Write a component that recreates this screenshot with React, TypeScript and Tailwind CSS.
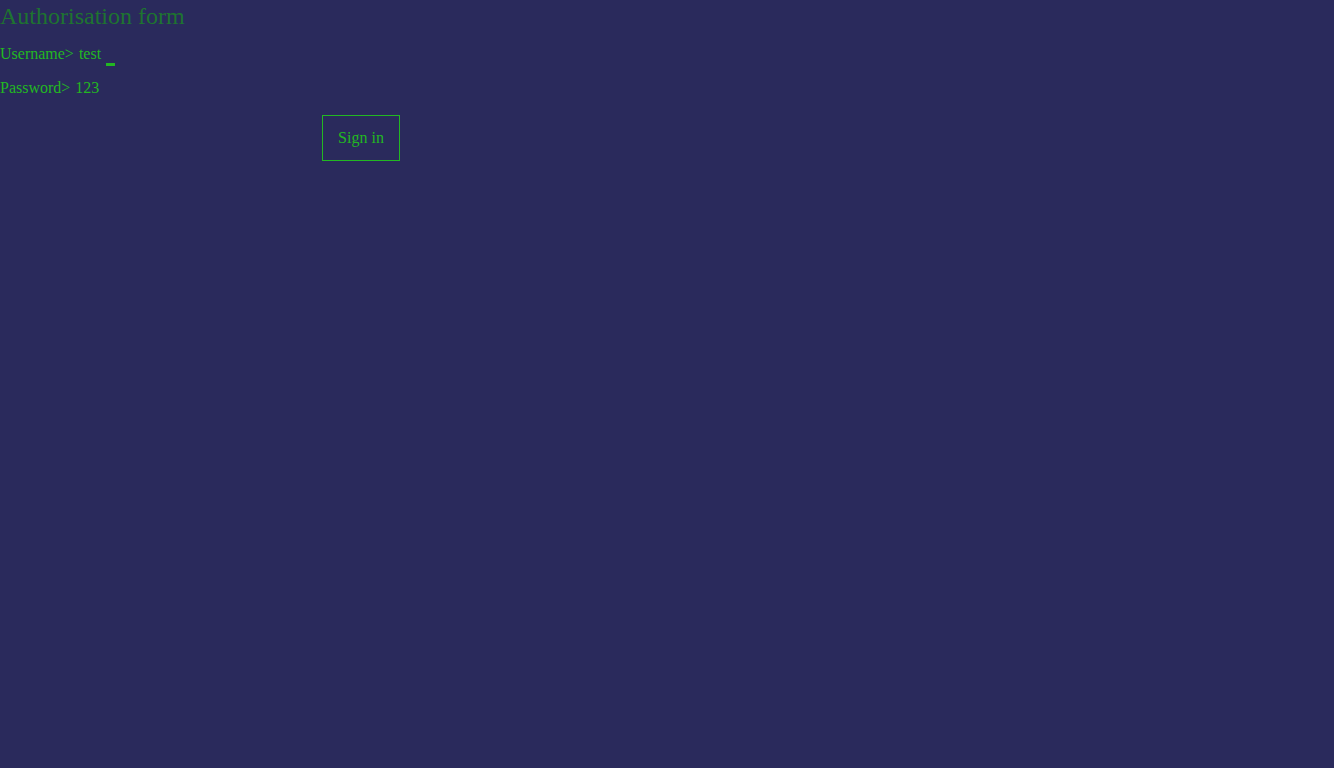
export default function App() {
  return (
    <div className="min-h-screen w-full bg-[#2a2a5c] font-['Liberation_Serif',serif] text-[#22b822]">
      <h1 className="text-[24px] leading-[32px] text-[#1e7430]">Authorisation form</h1>
      <div className="mt-[5px] flex h-[34px] items-center text-[16px]">
        <span>Username&gt;</span>
        <span className="ml-[5px]">test</span>
        <span className="ml-[5px] mt-[21px] h-[3px] w-[9px] bg-[#22b822]" />
      </div>
      <div className="flex h-[34px] items-center text-[16px]">
        <span>Password&gt;</span>
        <span className="ml-[5px]">123</span>
      </div>
      <div className="ml-[322px] mt-[10px]">
        <button className="h-[46px] w-[78px] border border-[#22b822] text-[16px] text-[#22b822]">
          Sign in
        </button>
      </div>
    </div>
  )
}
